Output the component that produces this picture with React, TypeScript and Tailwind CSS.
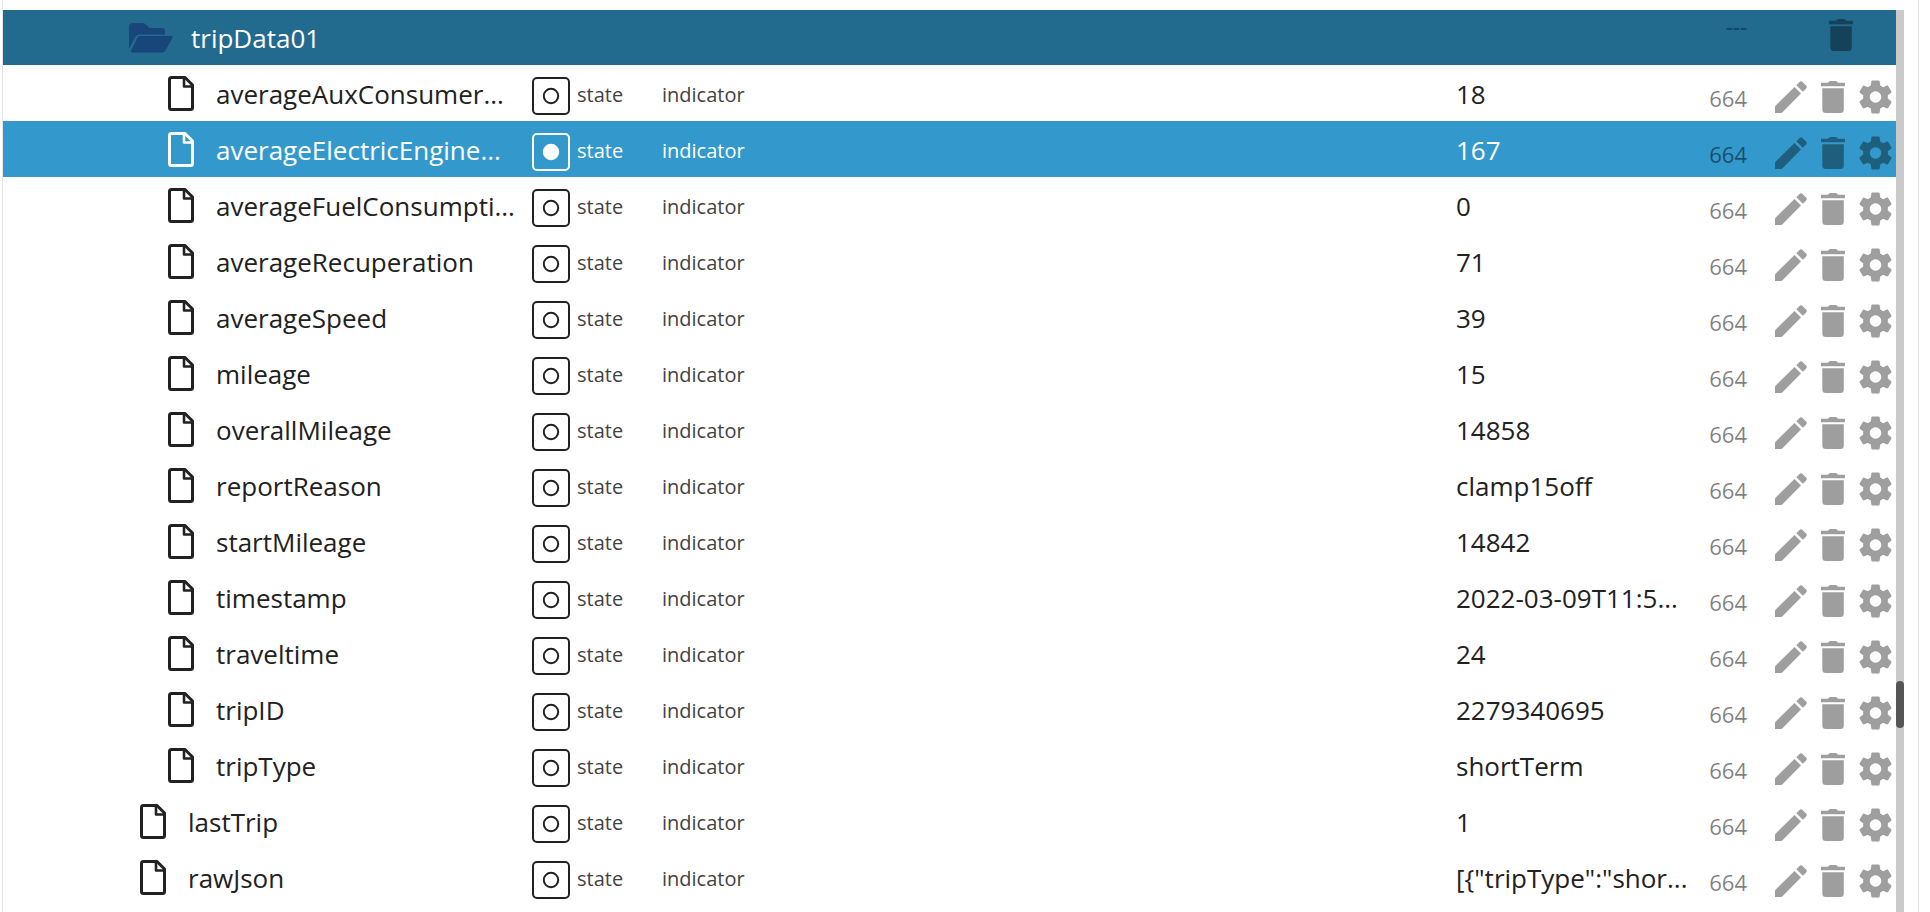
import React from "react";

type Item = { name: string; value: string; depth: 1 | 2; selected?: boolean };

const items: Item[] = [
  { name: "averageAuxConsumer...", value: "18", depth: 2 },
  { name: "averageElectricEngine...", value: "167", depth: 2, selected: true },
  { name: "averageFuelConsumpti...", value: "0", depth: 2 },
  { name: "averageRecuperation", value: "71", depth: 2 },
  { name: "averageSpeed", value: "39", depth: 2 },
  { name: "mileage", value: "15", depth: 2 },
  { name: "overallMileage", value: "14858", depth: 2 },
  { name: "reportReason", value: "clamp15off", depth: 2 },
  { name: "startMileage", value: "14842", depth: 2 },
  { name: "timestamp", value: "2022-03-09T11:5...", depth: 2 },
  { name: "traveltime", value: "24", depth: 2 },
  { name: "tripID", value: "2279340695", depth: 2 },
  { name: "tripType", value: "shortTerm", depth: 2 },
  { name: "lastTrip", value: "1", depth: 1 },
  { name: "rawJson", value: '[{"tripType":"shor...', depth: 1 },
];

function FolderIcon() {
  return (
    <svg viewBox="0 0 44 30" className="h-[30px] w-11 shrink-0 text-[#19467a]" fill="currentColor" aria-hidden="true">
      <path d="M0 26V4Q0 0 4 0H13.500Q15.500 0 17 1.500L20.500 5H32.500Q36 5 36 8.500V11.500H11Q7.500 11.500 6 14.500L0 26Z" />
      <path d="M10.500 13H42Q44.500 13 43.300 15.200L36.500 27.500Q35.500 29.500 33.500 29.500H3.200Q1 29.500 2.200 27.300L8.500 14.500Q9.300 13 10.500 13Z" />
    </svg>
  );
}

function FileIcon() {
  return (
    <svg viewBox="0 0 26 35" className="h-[35px] w-[26px] shrink-0" fill="none" stroke="currentColor" strokeWidth="3" strokeLinejoin="round" aria-hidden="true">
      <path d="M3.500 1.500H17L24.500 9V31.500Q24.500 33.500 22.500 33.500H3.500Q1.500 33.500 1.500 31.500V3.500Q1.500 1.500 3.500 1.500Z" />
      <path d="M16 2V10.500H24" strokeWidth="2.600" />
    </svg>
  );
}

function StateIcon({ filled }: { filled?: boolean }) {
  return (
    <svg viewBox="0 0 38 38" className="h-[38px] w-[38px] shrink-0" fill="none" stroke="currentColor" strokeWidth="2" aria-hidden="true">
      <rect x="1" y="1" width="36" height="36" rx="4" />
      <circle cx="19" cy="19" r="7.200" fill={filled ? "currentColor" : "none"} />
    </svg>
  );
}

function PencilIcon() {
  return (
    <svg viewBox="0 0 32 32" className="h-8 w-8" fill="currentColor" aria-hidden="true">
      <path d="M0 25.300V32H6.700L26 12.500L19.500 6Z" />
      <path d="M21.300 4.200L24.800 0.700Q26 -0.300 27.200 0.700L31.300 4.800Q32.400 6 31.300 7.200L27.800 10.700Z" />
    </svg>
  );
}

function TrashIcon() {
  return (
    <svg viewBox="0 0 24 32" className="h-8 w-6" fill="currentColor" aria-hidden="true">
      <path d="M0 1.800H6.500Q7.500 1.600 8.200 0.500Q8.600 0 9.500 0H14.500Q15.400 0 15.800 0.500Q16.500 1.600 17.500 1.800H24V5.200H0Z" />
      <path d="M1.300 7.200H22.800V28.500Q22.800 32 19.300 32H4.800Q1.300 32 1.300 28.500Z" />
    </svg>
  );
}

function GearIcon() {
  return (
    <svg viewBox="2 1.800 20 20.400" className="h-[34px] w-[33px]" fill="currentColor" aria-hidden="true">
      <path d="M12 15.500A3.500 3.500 0 1 1 12 8.500A3.500 3.500 0 0 1 12 15.500ZM19.430 12.970C19.470 12.650 19.500 12.330 19.500 12C19.500 11.670 19.470 11.340 19.430 11L21.540 9.370C21.730 9.220 21.780 8.950 21.660 8.730L19.660 5.270C19.540 5.050 19.270 4.960 19.050 5.050L16.560 6.050C16.040 5.660 15.500 5.320 14.870 5.070L14.500 2.420C14.460 2.180 14.250 2 14 2H10C9.750 2 9.540 2.180 9.500 2.420L9.130 5.070C8.500 5.320 7.960 5.660 7.440 6.050L4.950 5.050C4.730 4.960 4.460 5.050 4.340 5.270L2.340 8.730C2.210 8.950 2.270 9.220 2.460 9.370L4.570 11C4.530 11.340 4.500 11.670 4.500 12C4.500 12.330 4.530 12.650 4.570 12.970L2.460 14.630C2.270 14.780 2.210 15.050 2.340 15.270L4.340 18.730C4.460 18.950 4.730 19.030 4.950 18.950L7.440 17.940C7.960 18.340 8.500 18.680 9.130 18.930L9.500 21.580C9.540 21.820 9.750 22 10 22H14C14.250 22 14.460 21.820 14.500 21.580L14.870 18.930C15.500 18.670 16.040 18.340 16.560 17.940L19.050 18.950C19.270 19.030 19.540 18.950 19.660 18.730L21.660 15.270C21.780 15.050 21.730 14.780 21.540 14.630L19.430 12.970Z" />
    </svg>
  );
}

function IconButton({ label, children }: { label: string; children: React.ReactNode }) {
  return (
    <button type="button" aria-label={label} className="flex h-10 w-[42px] cursor-pointer items-center justify-center text-black/38">
      {children}
    </button>
  );
}

function ItemRow({ item }: { item: Item }) {
  return (
    <tr className={item.selected ? "h-14 bg-[#3399cc] font-medium text-white" : "h-14 text-[#212121]"}>
      <td className="p-0">
        <div className={item.depth === 2 ? "flex items-center gap-[22px] pl-[165px]" : "flex items-center gap-[22px] pl-[137px]"}>
          <FileIcon />
          <span className="pt-[2px] text-[26px] leading-9 whitespace-nowrap">{item.name}</span>
        </div>
      </td>
      <td className="p-0 pt-[6px]">
        <div className="flex items-center gap-[7px]">
          <StateIcon filled={item.selected} />
          <span className={item.selected ? "pb-[2px] text-xl leading-7" : "pb-[2px] text-xl leading-7 text-[#424242]"}>state</span>
        </div>
      </td>
      <td className={item.selected ? "p-0 pt-1 text-xl leading-7" : "p-0 pt-1 text-xl leading-7 text-[#424242]"}>indicator</td>
      <td className="p-0 pt-[2px] text-[26px] leading-9 whitespace-nowrap">{item.value}</td>
      <td className="p-0 pt-[10px] text-right text-[22px] leading-8 text-black/50">664</td>
      <td className="p-0 pt-2">
        <div className="flex justify-end">
          <IconButton label={"Edit " + item.name}><PencilIcon /></IconButton>
          <IconButton label={"Delete " + item.name}><TrashIcon /></IconButton>
          <IconButton label={"Settings of " + item.name}><GearIcon /></IconButton>
        </div>
      </td>
    </tr>
  );
}

export default function App() {
  return (
    <div className="min-h-screen overflow-hidden bg-white pr-[11px] pl-[2px] font-['Open_Sans','Noto_Sans',sans-serif]">
      <div className="flex min-h-screen border-x border-[#e4e4e4] pt-[10px] pr-[14px]">
        <main className="min-w-0 flex-1">
          <table className="w-full table-fixed border-collapse">
            <colgroup>
              <col className="w-[529px]" />
              <col className="w-[130px]" />
              <col />
              <col className="w-[242px]" />
              <col className="w-[49px]" />
              <col className="w-[149px]" />
            </colgroup>
            <tbody>
              <tr className="h-[55px] bg-[#236b8e] text-white">
                <td className="p-0" colSpan={4}>
                  <div className="flex items-center gap-[18px] pl-[126px]">
                    <FolderIcon />
                    <span className="text-[26px] leading-9 font-medium">tripData01</span>
                  </div>
                </td>
                <td className="p-0 pb-6 text-right text-[22px] leading-6 font-semibold text-[#15486e]">---</td>
                <td className="p-0 pb-[6px]">
                  <div className="flex justify-end pr-[34px]">
                    <IconButton label="Delete tripData01"><TrashIcon /></IconButton>
                  </div>
                </td>
              </tr>
              {items.map((item) => (
                <ItemRow key={item.name} item={item} />
              ))}
            </tbody>
          </table>
        </main>
        <div className="flex w-2 shrink-0 flex-col bg-[#cacaca]" aria-hidden="true">
          <div className="grow-[671]" />
          <div className="h-[47px] rounded-full bg-[#555555]" />
          <div className="grow-[184]" />
        </div>
      </div>
    </div>
  );
}
